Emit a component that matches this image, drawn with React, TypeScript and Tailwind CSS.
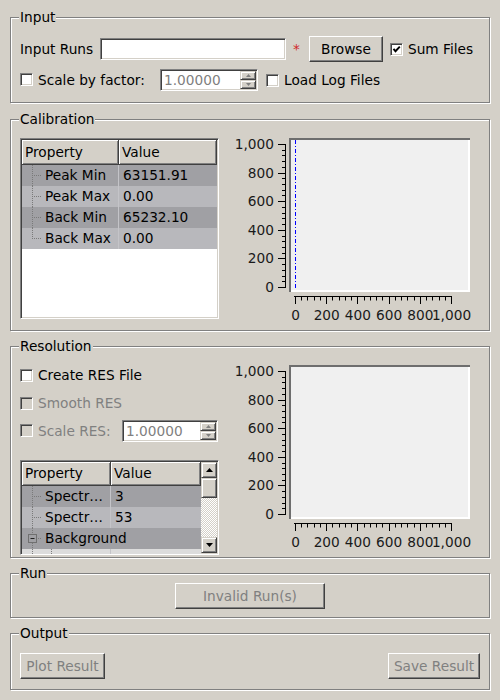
const sunken =
  "border border-t-[#808080] border-l-[#808080] border-b-white border-r-white shadow-[inset_1px_1px_0_#404040,inset_-1px_-1px_0_#d4d0c8] p-[1px]";
const raised =
  "border border-t-white border-l-white border-b-[#404040] border-r-[#404040] shadow-[inset_-1px_-1px_0_#808080] bg-[#d4d0c8]";
const barBtn =
  "border border-t-[#d4d0c8] border-l-[#d4d0c8] border-b-[#404040] border-r-[#404040] shadow-[inset_1px_1px_0_#fff,inset_-1px_-1px_0_#808080] bg-[#d4d0c8]";
const headCell =
  "border-r border-b border-r-[#404040] border-b-[#404040] shadow-[inset_1px_1px_0_#fff,inset_-1px_-1px_0_#808080] flex items-center pl-[3px]";

function Group({ title, className, children }: { title: string; className: string; children?: React.ReactNode }) {
  return (
    <div className={`relative border border-[#808080] shadow-[inset_1px_1px_0_#fff,1px_1px_0_#fff] ${className}`}>
      <span className="absolute left-[8px] top-[-9px] bg-[#d4d0c8] px-[1px] leading-[16px]">{title}</span>
      {children}
    </div>
  );
}

function Check({ checked, disabled, className = "" }: { checked?: boolean; disabled?: boolean; className?: string }) {
  return (
    <span
      className={`w-[13px] h-[13px] shrink-0 flex items-center justify-center border border-t-[#808080] border-l-[#808080] border-b-white border-r-white shadow-[inset_1px_1px_0_#404040,inset_-1px_-1px_0_#d4d0c8] ${
        disabled ? "bg-[#d4d0c8]" : "bg-white"
      } ${className}`}
    >
      {checked && (
        <svg width="9" height="9" viewBox="0 0 9 9">
          <polyline points="1.5,3.8 3.5,6.2 7.8,1.6" fill="none" stroke="#000" strokeWidth="1.9" />
        </svg>
      )}
    </span>
  );
}

function Button({ children, className, disabled }: { children: React.ReactNode; className: string; disabled?: boolean }) {
  return (
    <div className={`${raised} flex items-center justify-center shrink-0 ${disabled ? "text-[#808080]" : ""} ${className}`}>
      {children}
    </div>
  );
}

function Arrow({ up, color, w, h }: { up?: boolean; color: string; w: number; h: number }) {
  return (
    <svg width={w} height={h} viewBox={`0 0 ${w} ${h}`}>
      <polygon points={up ? `0,${h} ${w / 2},0 ${w},${h}` : `0,0 ${w / 2},${h} ${w},0`} fill={color} />
    </svg>
  );
}

function Spin({ className }: { className: string }) {
  return (
    <div className={`${sunken} bg-white h-[22px] flex shrink-0 ${className}`}>
      <span className="flex-1 pl-[2px] leading-[18px] text-[#808080]">1.00000</span>
      <div className="flex flex-col w-[16px]">
        <div className={`${barBtn} h-[9px] flex items-center justify-center`}>
          <Arrow up color="#808080" w={5} h={3} />
        </div>
        <div className={`${barBtn} h-[9px] flex items-center justify-center`}>
          <Arrow color="#808080" w={5} h={3} />
        </div>
      </div>
    </div>
  );
}

// tree branch drawing for the property browser
function Branch({ kind }: { kind: "mid" | "last" | "box" | "deep" }) {
  const dot = { stroke: "#7a7a7a", strokeDasharray: "1 1", strokeWidth: 1 };
  return (
    <svg width="23" height="21" className="shrink-0">
      {kind === "mid" && <line x1="10.5" y1="0" x2="10.5" y2="21" {...dot} />}
      {kind === "last" && <line x1="10.5" y1="0" x2="10.5" y2="11" {...dot} />}
      {kind !== "box" && kind !== "deep" && <line x1="12" y1="10.5" x2="20" y2="10.5" {...dot} />}
      {kind === "box" && (
        <>
          <line x1="10.5" y1="0" x2="10.5" y2="6" {...dot} />
          <line x1="10.5" y1="15" x2="10.5" y2="21" {...dot} />
          <rect x="6.5" y="6.5" width="8" height="8" fill="none" stroke="#707070" />
          <line x1="8.5" y1="10.5" x2="12.5" y2="10.5" stroke="#202020" />
          <line x1="16" y1="10.5" x2="20" y2="10.5" {...dot} />
        </>
      )}
      {kind === "deep" && <line x1="10.5" y1="0" x2="10.5" y2="21" {...dot} />}
    </svg>
  );
}

function Chart({ marker }: { marker?: boolean }) {
  const yLabels = ["0", "200", "400", "600", "800", "1,000"];
  const ys = Array.from({ length: 26 }, (_, i) => 287 - i * 5.72);
  const xs = Array.from({ length: 26 }, (_, i) => 296 + i * 6.24);
  return (
    <svg width={260} height={190} viewBox="222 136 260 190" className="shrink-0" fontFamily="DejaVu Sans" fontSize={13.7}>
      <rect x={290} y={138} width={181} height={154} fill="#f0f0f0" />
      <rect x={290} y={138} width={181} height={2} fill="#6e6e6e" />
      <rect x={290} y={138} width={2} height={154} fill="#6e6e6e" />
      <rect x={292} y={290} width={179} height={2} fill="#fff" />
      <rect x={469} y={140} width={2} height={152} fill="#fff" />
      {marker && (
        <line x1={296.5} y1={140} x2={296.5} y2={290} stroke="#0000ff" strokeDasharray="4 2 1 2" />
      )}
      <line x1={286.5} y1={144} x2={286.5} y2={288} stroke="#000" />
      {ys.map((y, i) => {
        const yy = Math.round(y) + 0.5;
        return <line key={i} x1={i % 5 === 0 ? 279 : 283} y1={yy} x2={287} y2={yy} stroke="#000" />;
      })}
      {yLabels.map((t, i) => (
        <text key={t} x={275} y={Math.round(287 - i * 28.6) + 5} textAnchor="end" fill="#1a1a1a">
          {t}
        </text>
      ))}
      <line x1={295} y1={296.5} x2={453} y2={296.5} stroke="#000" />
      {xs.map((x, i) => {
        const xx = Math.round(x) + 0.5;
        return <line key={i} x1={xx} y1={296} x2={xx} y2={i % 5 === 0 ? 304 : 300.5} stroke="#000" />;
      })}
      {yLabels.map((t, i) => (
        <text key={t} x={296.5 + i * 31.2} y={320} textAnchor="middle" fill="#1a1a1a">
          {t}
        </text>
      ))}
    </svg>
  );
}

const calibRows = [
  { name: "Peak Min", value: "63151.91" },
  { name: "Peak Max", value: "0.00" },
  { name: "Back Min", value: "65232.10" },
  { name: "Back Max", value: "0.00" },
];

function CalibTable() {
  return (
    <div className={`${sunken} bg-white w-[199px] h-[181px] flex flex-col overflow-hidden shrink-0`}>
      <div className="flex h-[25px] shrink-0 bg-[#d4d0c8]">
        <div className={`${headCell} w-[97px]`}>Property</div>
        <div className={`${headCell} flex-1`}>Value</div>
      </div>
      {calibRows.map((r, i) => (
        <div key={r.name} className={`flex h-[21px] shrink-0 ${i % 2 === 0 ? "bg-[#a0a0a4]" : "bg-[#b8b8bc]"}`}>
          <div className="w-[97px] flex items-center border-r border-r-[#c4c4c8]">
            <Branch kind={i === calibRows.length - 1 ? "last" : "mid"} />
            <span>{r.name}</span>
          </div>
          <div className="flex-1 flex items-center pl-[4px]">{r.value}</div>
        </div>
      ))}
    </div>
  );
}

function ResTable() {
  return (
    <div className={`${sunken} bg-white w-[199px] h-[95px] flex overflow-hidden shrink-0 mt-[18px]`}>
      <div className="w-[179px] flex flex-col">
        <div className="flex h-[24px] shrink-0 bg-[#d4d0c8]">
          <div className={`${headCell} w-[89px]`}>Property</div>
          <div className={`${headCell} flex-1`}>Value</div>
        </div>
        {[
          { v: "3", bg: "bg-[#a0a0a4]" },
          { v: "53", bg: "bg-[#b8b8bc]" },
        ].map((r, i) => (
          <div key={i} className={`flex h-[21px] shrink-0 ${r.bg}`}>
            <div className="w-[89px] flex items-center border-r border-r-[#c4c4c8]">
              <Branch kind="mid" />
              <span>Spectr…</span>
            </div>
            <div className="flex-1 flex items-center pl-[4px]">{r.v}</div>
          </div>
        ))}
        <div className="flex h-[21px] shrink-0 items-center bg-[#a0a0a4]">
          <Branch kind="box" />
          <span>Background</span>
        </div>
        <div className="flex h-[21px] shrink-0 bg-[#dcdcdc]">
          <div className="w-[89px] flex border-r border-r-[#c4c4c8]">
            <Branch kind="deep" />
            <svg width="22" height="21" className="shrink-0 -ml-[4px]">
              <line x1="10.5" y1="0" x2="10.5" y2="21" stroke="#7a7a7a" strokeDasharray="1 1" />
            </svg>
          </div>
        </div>
      </div>
      <div className="w-[16px] flex flex-col">
        <div className={`${barBtn} h-[16px] shrink-0 flex items-center justify-center`}>
          <Arrow up color="#000" w={7} h={4} />
        </div>
        <div className={`${barBtn} h-[20px] shrink-0`} />
        <div className="flex-1 bg-[image:repeating-conic-gradient(#fff_0_25%,#d4d0c8_0_50%)] bg-[length:2px_2px]" />
        <div className={`${barBtn} h-[16px] shrink-0 flex items-center justify-center`}>
          <Arrow color="#000" w={7} h={4} />
        </div>
      </div>
    </div>
  );
}

export default function App() {
  return (
    <div className="w-[500px] h-[700px] overflow-hidden bg-[#d4d0c8] px-[10px] pt-[17px] font-['DejaVu_Sans',sans-serif] text-[13.7px] text-black">
      {/* Input */}
      <Group title="Input" className="h-[86px]">
        <div className="flex flex-col gap-[7px] pt-[18px] pl-[9px]">
          <div className="flex items-center h-[26px]">
            <span className="w-[80px] shrink-0">Input Runs</span>
            <div className={`${sunken} bg-white w-[186px] h-[22px] shrink-0`} />
            <span className="w-[23px] pl-[7px] text-[#d02828] shrink-0">*</span>
            <Button className="w-[74px] h-[26px]">Browse</Button>
            <Check checked className="ml-[7px]" />
            <span className="ml-[5px]">Sum Files</span>
          </div>
          <div className="flex items-center h-[22px]">
            <div className="w-[140px] flex items-center gap-[5px] shrink-0">
              <Check />
              <span>Scale by factor:</span>
            </div>
            <Spin className="w-[98px]" />
            <Check className="ml-[8px]" />
            <span className="ml-[5px]">Load Log Files</span>
          </div>
        </div>
      </Group>

      {/* Calibration */}
      <Group title="Calibration" className="h-[212px] mt-[16px]">
        <div className="flex items-start pt-[18px] pl-[9px]">
          <CalibTable />
          <div className="ml-[2px] -mt-[2px]">
            <Chart marker />
          </div>
        </div>
      </Group>

      {/* Resolution */}
      <Group title="Resolution" className="h-[212px] mt-[15px]">
        <div className="flex items-start pt-[16px] pl-[9px]">
          <div className="w-[199px] flex flex-col pt-[1px] shrink-0">
            <div className="flex items-center gap-[5px] h-[22px]">
              <Check />
              <span>Create RES File</span>
            </div>
            <div className="flex items-center gap-[5px] h-[22px] mt-[6px] text-[#808080]">
              <Check disabled />
              <span>Smooth RES</span>
            </div>
            <div className="flex items-center h-[22px] mt-[6px]">
              <div className="w-[102px] flex items-center gap-[5px] text-[#808080] shrink-0">
                <Check disabled />
                <span>Scale RES:</span>
              </div>
              <Spin className="w-[96px]" />
            </div>
            <ResTable />
          </div>
          <div className="ml-[2px]">
            <Chart />
          </div>
        </div>
      </Group>

      {/* Run */}
      <Group title="Run" className="h-[45px] mt-[15px]">
        <div className="flex justify-center pt-[9px]">
          <Button disabled className="w-[150px] h-[26px]">
            Invalid Run(s)
          </Button>
        </div>
      </Group>

      {/* Output */}
      <Group title="Output" className="h-[57px] mt-[15px]">
        <div className="flex justify-between px-[9px] pt-[19px]">
          <Button disabled className="w-[85px] h-[26px]">
            Plot Result
          </Button>
          <Button disabled className="w-[92px] h-[26px]">
            Save Result
          </Button>
        </div>
      </Group>
    </div>
  );
}
